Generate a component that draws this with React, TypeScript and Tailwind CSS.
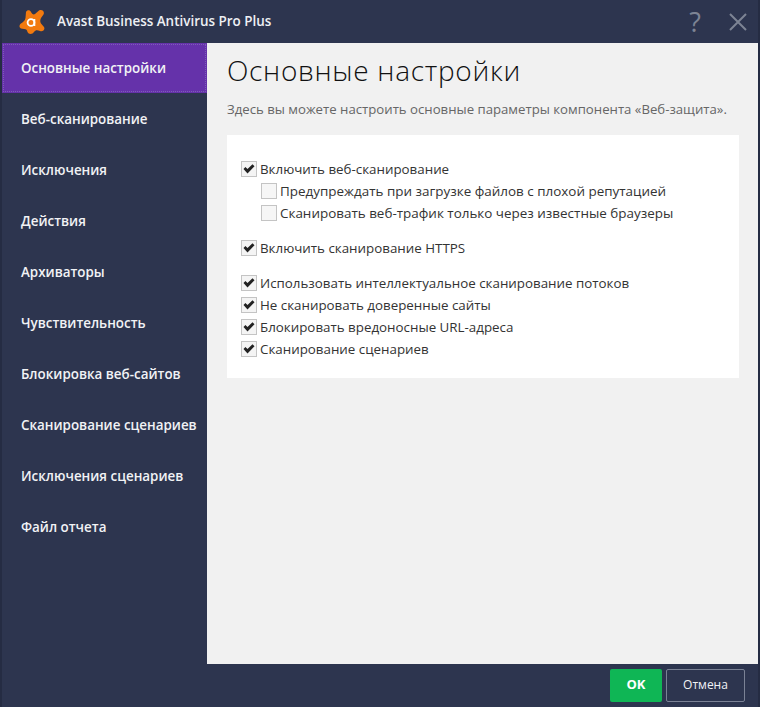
import React from 'react';

const navItems = [
  'Основные настройки',
  'Веб-сканирование',
  'Исключения',
  'Действия',
  'Архиваторы',
  'Чувствительность',
  'Блокировка веб-сайтов',
  'Сканирование сценариев',
  'Исключения сценариев',
  'Файл отчета',
];

const Check = ({ checked, label, nested }: { checked: boolean; label: string; nested?: boolean }) => (
  <div className={`flex h-[22px] items-center ${nested ? 'pl-5' : ''}`}>
    <span className={`flex size-4 shrink-0 items-center justify-center border border-[#c4c4c4] ${checked ? 'bg-[#f4f4f4]' : 'bg-[#f6f6f6]'}`}>
      {checked && (
        <svg width="12" height="10" viewBox="0 0 12 10">
          <path d="M0.5 5 L2.4 3 L4.5 5 L9.5 0.2 L11.5 2.2 L4.5 9.6 Z" fill="#222" />
        </svg>
      )}
    </span>
    <span className={`ml-[3px] text-[#333] ${nested ? 'text-[13.45px]' : 'text-[13.35px]'}`}>{label}</span>
  </div>
);

const App = () => {
  return (
    <div className="flex h-[707px] w-[760px] flex-col overflow-hidden border-x-2 border-[#252c43] bg-[#2d354f] font-['Open_Sans','Noto_Sans',sans-serif]">
      {/* Title bar */}
      <div className="flex h-[43px] shrink-0 items-center pl-[17px] pr-[10px]">
        <svg width="26" height="26" viewBox="0 0 26 26">
          <path
            d="M7 3 C8 0.5 11 0.5 12 3 C13 5 14.5 6 16 5 L20 1.5 C23 0 26 2.5 24.5 5.5 L22 9 C21 11 21 13 22 14.5 L25 18 C26.5 21 23.5 23 21 22 C18 21 16.5 21 15 23 C13.5 25.5 9.5 25.5 8.5 23 C8 21 7.5 20 5 20 L2 19.5 C0 18.5 0 16 2 14.5 C4 13 6 12 6.5 9 Z"
            fill="#f27a0f"
          />
          <circle cx="12" cy="13.5" r="3.4" fill="none" stroke="#fff" strokeWidth="1.8" />
          <path d="M15.4 10 V17" stroke="#fff" strokeWidth="1.8" />
        </svg>
        <span className="ml-[12px] text-[13.45px] font-semibold text-[#eef0f4]">Avast Business Antivirus Pro Plus</span>
        <div className="ml-auto flex items-center gap-[27px]">
          <span className="text-[27px] leading-none text-[#7d8494]">?</span>
          <svg width="20" height="20" viewBox="0 0 20 20">
            <path d="M2 2 L18 18 M18 2 L2 18" stroke="#7d8494" strokeWidth="2" />
          </svg>
        </div>
      </div>

      <div className="flex min-h-0 flex-1">
        {/* Sidebar */}
        <nav className="w-[205px] shrink-0">
          {navItems.map((item, idx) => (
            <div
              key={item}
              className={`flex items-center pl-[19px] text-[13.4px] font-semibold text-[#f1f2f5] ${idx === 0 ? 'mb-[1px] h-[50px] bg-[#6532aa] outline-1 -outline-offset-2 outline-dotted outline-[#7f5cb8]' : 'h-[51px]'}`}
            >
              {item}
            </div>
          ))}
        </nav>

        {/* Content */}
        <main className="flex-1 bg-[#f1f1f1] pl-5 pr-[19px]">
          <h1 className="mt-[7px] text-[28px] font-light leading-[40px] tracking-[0.7px] text-[#111]">Основные настройки</h1>
          <p className="mt-[9px] text-[13.2px] leading-[20px] text-[#666]">
            Здесь вы можете настроить основные параметры компонента «Веб-защита».
          </p>
          <div className="mt-[16px] h-[243px] bg-white pl-[14px] pt-[23px]">
            <Check checked label="Включить веб-сканирование" />
            <Check nested checked={false} label="Предупреждать при загрузке файлов с плохой репутацией" />
            <Check nested checked={false} label="Сканировать веб-трафик только через известные браузеры" />
            <div className="mt-[13px]">
              <Check checked label="Включить сканирование HTTPS" />
            </div>
            <div className="mt-[13px]">
              <Check checked label="Использовать интеллектуальное сканирование потоков" />
              <Check checked label="Не сканировать доверенные сайты" />
              <Check checked label="Блокировать вредоносные URL-адреса" />
              <Check checked label="Сканирование сценариев" />
            </div>
          </div>
        </main>
      </div>

      {/* Footer */}
      <div className="flex h-[43px] shrink-0 items-center justify-end gap-1 pb-[1px] pr-[13px]">
        <button className="flex h-[33px] w-[52px] items-center justify-center rounded-[2px] bg-[#0fb655] text-[13px] font-bold text-white">
          OK
        </button>
        <button className="flex h-[33px] w-[79px] items-center justify-center rounded-[2px] border border-[#7b8295] text-[12px] text-[#f1f2f5]">
          Отмена
        </button>
      </div>
    </div>
  );
};

export default App;
